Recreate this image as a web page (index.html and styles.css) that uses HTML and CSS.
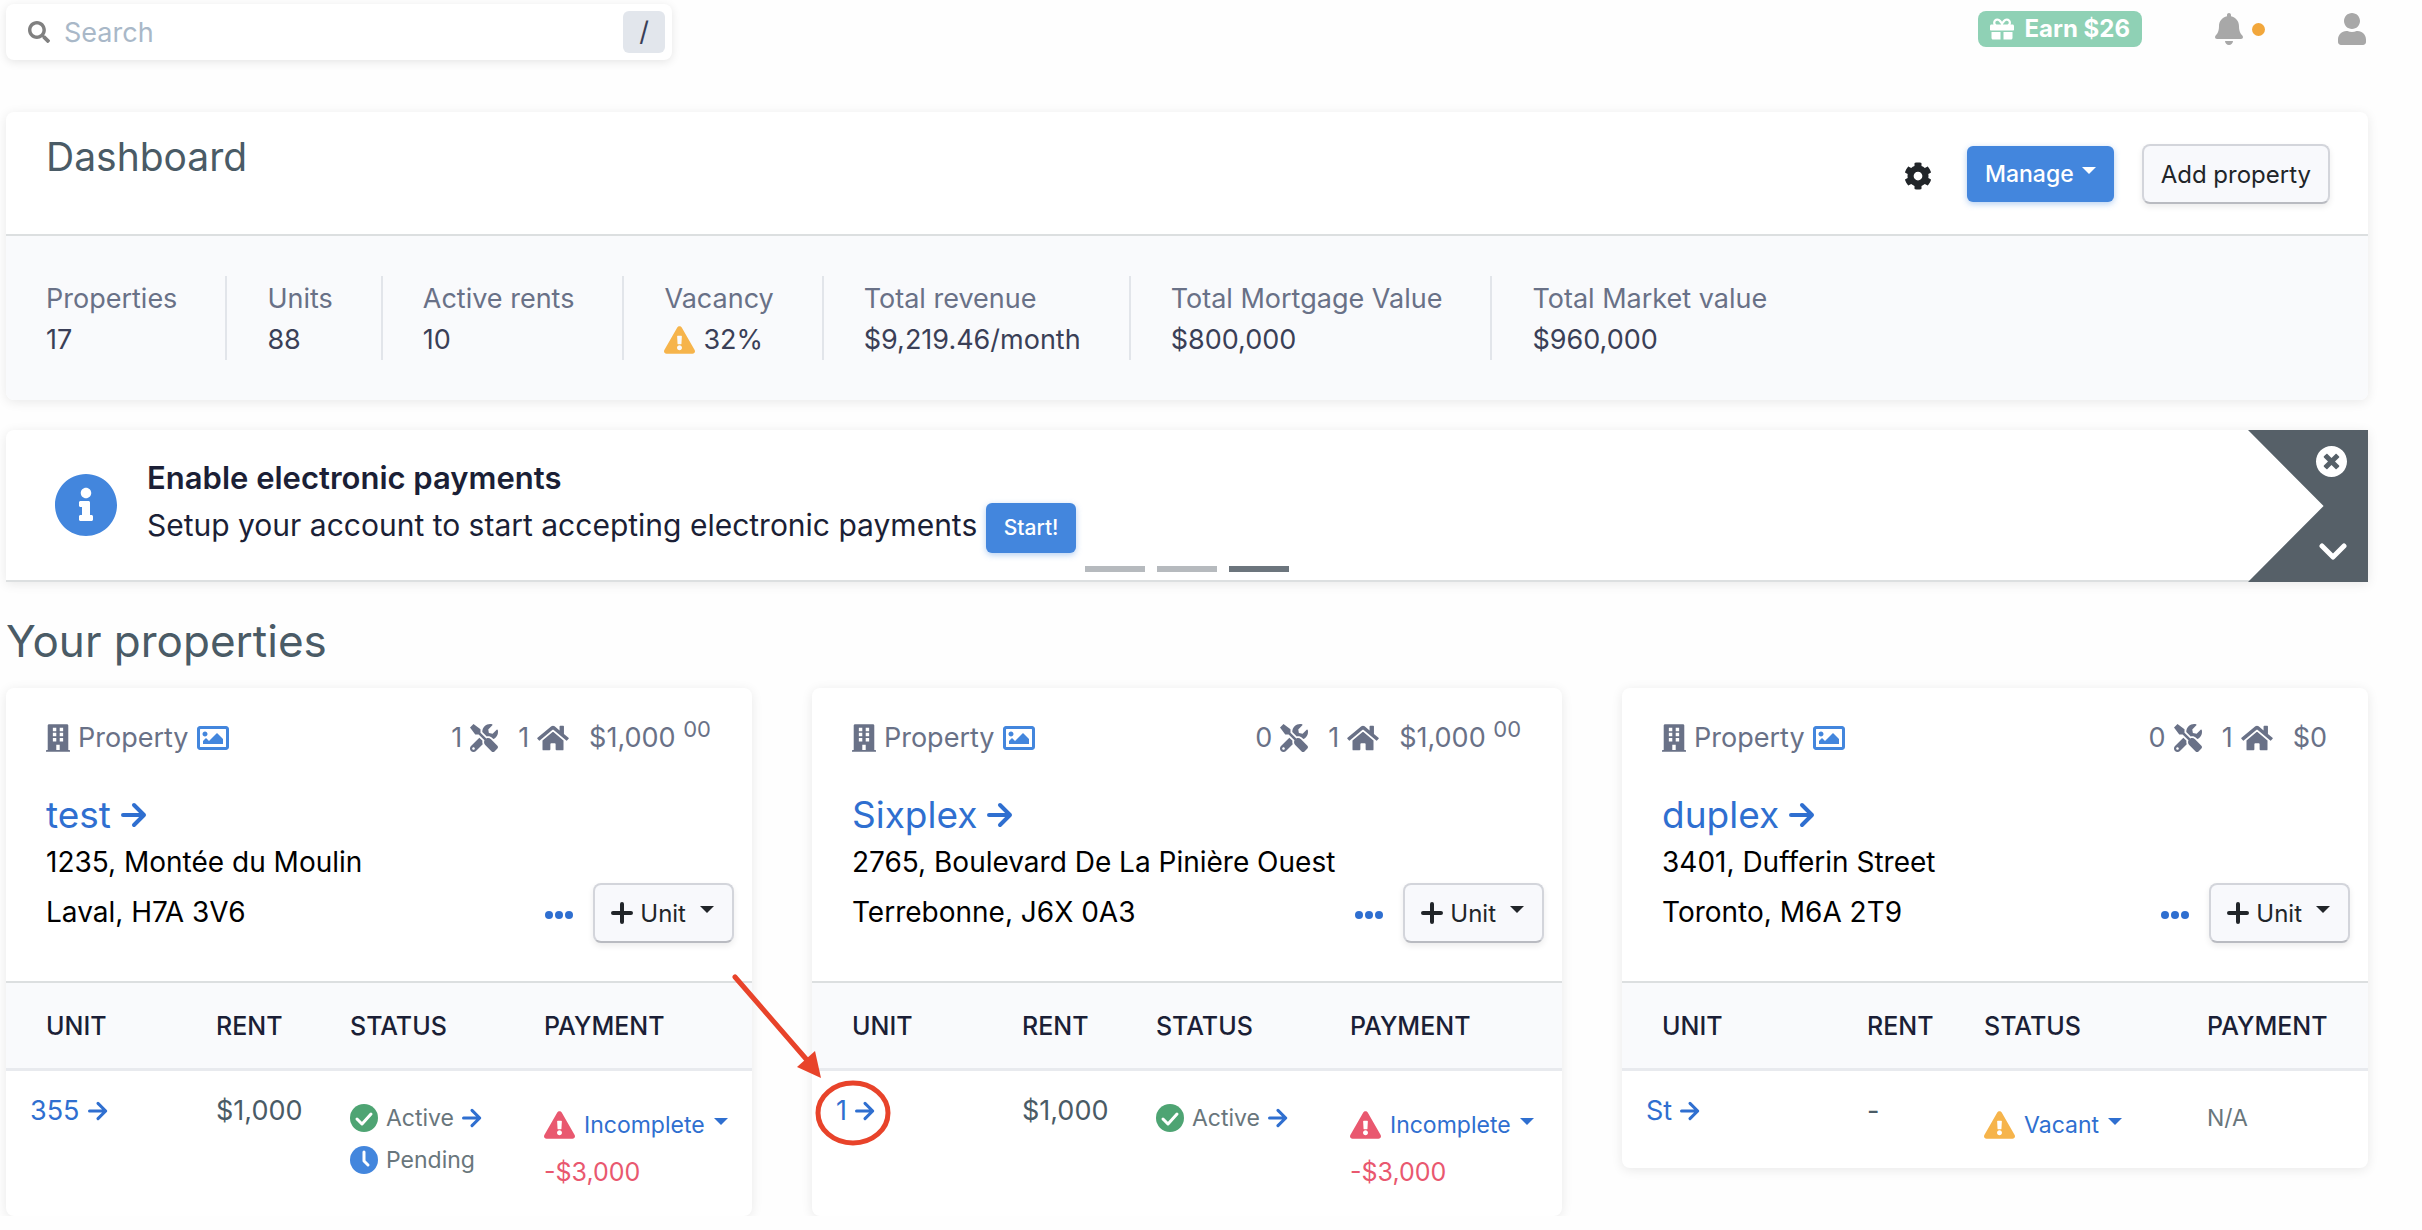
FILE: index.html
```html
<!DOCTYPE html>
<html lang="en">
<head>
    <meta charset="utf-8">
    <title>Dashboard</title>
    <link rel="stylesheet" href="styles.css">
</head>
<body>
    <!-- Icons used on the page -->
    <svg class="sprite" aria-hidden="true">
        <symbol id="search" viewBox="0 0 512 512"><path d="M505 442.7L405.3 343c-4.5-4.5-10.6-7-17-7H372c27.6-35.3 44-79.7 44-128C416 93.1 322.9 0 208 0S0 93.1 0 208s93.1 208 208 208c48.3 0 92.7-16.4 128-44v16.3c0 6.4 2.5 12.5 7 17l99.7 99.7c9.4 9.4 24.6 9.4 33.9 0l28.3-28.3c9.4-9.4 9.4-24.6.1-34zM208 336c-70.7 0-128-57.2-128-128 0-70.7 57.2-128 128-128 70.7 0 128 57.2 128 128 0 70.7-57.2 128-128 128z"/></symbol>
        <symbol id="gift" viewBox="0 0 512 512"><path d="M32 448c0 17.7 14.3 32 32 32h160V320H32v128zm256 32h160c17.7 0 32-14.3 32-32V320H288v160zm192-320h-42.1c6.2-12.1 10.1-25.5 10.1-40 0-48.5-39.5-88-88-88-41.6 0-68.5 21.3-103 68.3-34.5-47-61.4-68.3-103-68.3-48.5 0-88 39.5-88 88 0 14.5 3.8 27.9 10.1 40H32c-17.7 0-32 14.3-32 32v80c0 8.8 7.2 16 16 16h480c8.8 0 16-7.2 16-16v-80c0-17.7-14.3-32-32-32zm-326.1 0c-22.1 0-40-17.9-40-40s17.9-40 40-40c19.9 0 34.6 3.3 86.1 80h-86.1zm206.1 0h-86.1c51.4-76.5 65.7-80 86.1-80 22.1 0 40 17.9 40 40s-17.9 40-40 40z"/></symbol>
        <symbol id="bell" viewBox="0 0 448 512"><path d="M224 512c35.32 0 63.97-28.65 63.97-64H160.03c0 35.35 28.65 64 63.97 64zm215.39-149.71c-19.32-20.76-55.47-51.99-55.47-154.29 0-77.7-54.48-139.9-127.94-155.16V32c0-17.67-14.32-32-31.98-32s-31.98 14.33-31.98 32v20.84C118.56 68.1 64.08 130.3 64.08 208c0 102.3-36.15 133.53-55.47 154.29-6 6.45-8.66 14.16-8.61 21.71.11 16.4 12.98 32 32.1 32h383.8c19.12 0 32-15.6 32.1-32 .05-7.55-2.61-15.27-8.61-21.71z"/></symbol>
        <symbol id="user" viewBox="0 0 448 512"><path d="M224 256c70.7 0 128-57.3 128-128S294.7 0 224 0 96 57.3 96 128s57.3 128 128 128zm89.6 32h-16.7c-22.2 10.2-46.9 16-72.9 16s-50.6-5.8-72.9-16h-16.7C60.2 288 0 348.2 0 422.4V464c0 26.5 21.5 48 48 48h352c26.5 0 48-21.5 48-48v-41.6c0-74.2-60.2-134.4-134.4-134.4z"/></symbol>
        <symbol id="cog" viewBox="0 0 512 512"><path d="M487.4 315.7l-42.6-24.6c4.3-23.2 4.3-47 0-70.2l42.6-24.6c4.9-2.8 7.1-8.6 5.5-14-11.1-35.6-30-67.8-54.7-94.6-3.8-4.1-10-5.1-14.8-2.3L380.8 110c-17.9-15.4-38.5-27.3-60.8-35.1V25.8c0-5.6-3.9-10.5-9.4-11.7-36.7-8.2-74.3-7.8-109.2 0-5.5 1.2-9.4 6.1-9.4 11.7V75c-22.2 7.9-42.8 19.8-60.8 35.1L88.7 85.5c-4.9-2.8-11-1.9-14.8 2.3-24.7 26.7-43.6 58.9-54.7 94.6-1.7 5.4.6 11.2 5.5 14L67.3 221c-4.3 23.2-4.3 47 0 70.2l-42.6 24.6c-4.9 2.8-7.1 8.6-5.5 14 11.1 35.6 30 67.8 54.7 94.6 3.8 4.1 10 5.1 14.8 2.3l42.6-24.6c17.9 15.4 38.5 27.3 60.8 35.1v49.2c0 5.6 3.9 10.5 9.4 11.7 36.7 8.2 74.3 7.8 109.2 0 5.5-1.2 9.4-6.1 9.4-11.7v-49.2c22.2-7.9 42.8-19.8 60.8-35.1l42.6 24.6c4.9 2.8 11 1.9 14.8-2.3 24.7-26.7 43.6-58.9 54.7-94.6 1.5-5.5-.7-11.3-5.6-14.1zM256 336c-44.1 0-80-35.9-80-80s35.9-80 80-80 80 35.9 80 80-35.9 80-80 80z"/></symbol>
        <symbol id="warning" viewBox="0 0 576 512"><path d="M569.517 440.013C587.975 472.007 564.806 512 527.94 512H48.054c-36.937 0-59.999-40.055-41.577-71.987L246.423 23.985c18.467-32.009 64.72-31.951 83.154 0l239.94 416.028zM288 354c-25.405 0-46 20.595-46 46s20.595 46 46 46 46-20.595 46-46-20.595-46-46-46zm-43.673-165.346l7.418 136c.347 6.364 5.609 11.346 11.982 11.346h48.546c6.373 0 11.635-4.982 11.982-11.346l7.418-136c.375-6.874-5.098-12.654-11.982-12.654h-63.383c-6.884 0-12.356 5.78-11.981 12.654z"/></symbol>
        <symbol id="info" viewBox="8 8 496 496"><path d="M256 8C119.043 8 8 119.083 8 256c0 136.997 111.043 248 248 248s248-111.003 248-248C504 119.083 392.957 8 256 8zm0 110c23.196 0 42 18.804 42 42s-18.804 42-42 42-42-18.804-42-42 18.804-42 42-42zm56 254c0 6.627-5.373 12-12 12h-88c-6.627 0-12-5.373-12-12v-24c0-6.627 5.373-12 12-12h12v-64h-12c-6.627 0-12-5.373-12-12v-24c0-6.627 5.373-12 12-12h64c6.627 0 12 5.373 12 12v100h12c6.627 0 12 5.373 12 12v24z"/></symbol>
        <symbol id="close" viewBox="8 8 496 496"><path d="M256 8C119 8 8 119 8 256s111 248 248 248 248-111 248-248S393 8 256 8zm121.6 313.1c4.7 4.7 4.7 12.3 0 17L338 377.6c-4.7 4.7-12.3 4.7-17 0L256 312l-65.1 65.6c-4.7 4.7-12.3 4.7-17 0L134.4 338c-4.7-4.7-4.7-12.3 0-17l65.6-65-65.6-65.1c-4.7-4.7-4.7-12.3 0-17l39.6-39.6c4.7-4.7 12.3-4.7 17 0l65 65.7 65.1-65.6c4.7-4.7 12.3-4.7 17 0l39.6 39.6c4.7 4.7 4.7 12.3 0 17L312 256l65.6 65.1z"/></symbol>
        <symbol id="chevron" viewBox="0 0 28 18"><path d="M3 3l11 11L25 3" fill="none" stroke="currentColor" stroke-width="5" stroke-linecap="round" stroke-linejoin="round"/></symbol>
        <symbol id="building" viewBox="0 0 448 512"><path fill-rule="evenodd" d="M436 480h-20V24c0-13-11-24-24-24H56C43 0 32 11 32 24v456H12c-7 0-12 5-12 12v20h448v-20c0-7-5-12-12-12zM128 64h64v64h-64zM256 64h64v64h-64zM128 160h64v64h-64zM256 160h64v64h-64zM128 256h64v64h-64zM256 256h64v64h-64zM192 384h64v96h-64z"/></symbol>
        <symbol id="image" viewBox="0 0 512 512"><path d="M464 64H48C21.49 64 0 85.49 0 112v288c0 26.51 21.49 48 48 48h416c26.51 0 48-21.49 48-48V112c0-26.51-21.49-48-48-48zm-6 336H54a6 6 0 0 1-6-6V118a6 6 0 0 1 6-6h404a6 6 0 0 1 6 6v276a6 6 0 0 1-6 6zM128 152c-22.091 0-40 17.909-40 40s17.909 40 40 40 40-17.909 40-40-17.909-40-40-40zM96 352h320v-80l-87.515-87.515c-4.686-4.686-12.284-4.686-16.971 0L192 304l-39.515-39.515c-4.686-4.686-12.284-4.686-16.971 0L96 304v48z"/></symbol>
        <symbol id="tools" viewBox="0 0 512 512"><path d="M501.1 395.7L384 278.6c-23.1-23.1-57.6-27.6-85.4-13.9L192 158.1V96L64 0 0 64l96 128h62.1l106.6 106.6c-13.6 27.8-9.2 62.3 13.9 85.4l117.1 117.1c14.6 14.6 38.2 14.6 52.7 0l52.7-52.7c14.5-14.6 14.5-38.2 0-52.7zM331.7 225c28.3 0 54.9 11 74.9 31l19.4 19.4c15.8-6.9 30.8-16.5 43.8-29.5 37.1-37.1 49.7-89.3 37.9-136.7-2.2-9-13.5-12.1-20.1-5.5l-74.4 74.4-67.9-11.3L334 98.9l74.4-74.4c6.6-6.6 3.4-17.9-5.7-20.2-47.4-11.7-99.6.9-136.6 37.9-28.5 28.5-41.9 66.1-41.2 103.6l82.1 82.1c8.1-1.9 16.5-2.9 24.7-2.9zm-103.9 82l-56.7-56.7L18.7 402.8c-25 25-25 65.5 0 90.5s65.5 25 90.5 0l123.6-123.6c-7.6-19.9-9.9-41.6-5-62.7zM64 472c-13.2 0-24-10.8-24-24 0-13.3 10.7-24 24-24s24 10.7 24 24c0 13.2-10.7 24-24 24z"/></symbol>
        <symbol id="home" viewBox="0 0 576 512"><path d="M280.37 148.26L96 300.11V464a16 16 0 0 0 16 16l112.06-.29a16 16 0 0 0 15.92-16V368a16 16 0 0 1 16-16h64a16 16 0 0 1 16 16v95.64a16 16 0 0 0 16 16.05L464 480a16 16 0 0 0 16-16V300L295.67 148.26a12.19 12.19 0 0 0-15.3 0zM571.6 251.47L488 182.56V44.05a12 12 0 0 0-12-12h-56a12 12 0 0 0-12 12v72.61L318.47 43a48 48 0 0 0-61 0L4.34 251.47a12 12 0 0 0-1.6 16.9l25.5 31A12 12 0 0 0 45.15 301l235.22-193.74a12.19 12.19 0 0 1 15.3 0L530.9 301a12 12 0 0 0 16.9-1.6l25.5-31a12 12 0 0 0-1.7-16.93z"/></symbol>
        <symbol id="arrow" viewBox="0 0 26 26"><path d="M2 13h21M13 3l10 10-10 10" fill="none" stroke="currentColor" stroke-width="4" stroke-linecap="round" stroke-linejoin="round"/></symbol>
        <symbol id="dots" viewBox="0 0 28 10"><circle cx="4" cy="5" r="4"/><circle cx="14" cy="5" r="4"/><circle cx="24" cy="5" r="4"/></symbol>
        <symbol id="plus" viewBox="0 0 22 22"><path d="M11 2v18M2 11h18" fill="none" stroke="currentColor" stroke-width="4" stroke-linecap="round"/></symbol>
        <symbol id="check" viewBox="0 0 28 28"><circle cx="14" cy="14" r="14"/><path d="M7 15l5 5 9-10" fill="none" stroke="#fff" stroke-width="3" stroke-linecap="round" stroke-linejoin="round"/></symbol>
        <symbol id="clock" viewBox="0 0 28 28"><circle cx="14" cy="14" r="14"/><path d="M14 6v9l4 4" fill="none" stroke="#fff" stroke-width="3" stroke-linecap="round" stroke-linejoin="round"/></symbol>
    </svg>

    <div class="page">
        <header class="topbar">
            <label class="search">
                <svg class="icon icon-search"><use href="#search"/></svg>
                <input type="text" placeholder="Search" aria-label="Search">
                <kbd>/</kbd>
            </label>
            <nav class="top-links">
                <a href="#" class="earn"><svg class="icon icon-gift"><use href="#gift"/></svg>Earn $26</a>
                <a href="#" class="bell" aria-label="Notifications"><svg class="icon icon-top"><use href="#bell"/></svg><span class="bell-dot"></span></a>
                <a href="#" class="account" aria-label="Account"><svg class="icon icon-top"><use href="#user"/></svg></a>
            </nav>
        </header>

        <section class="card summary">
            <div class="summary-head">
                <h1>Dashboard</h1>
                <div class="summary-actions">
                    <button type="button" class="cog-btn" aria-label="Settings"><svg class="icon icon-cog"><use href="#cog"/></svg></button>
                    <button type="button" class="btn btn-primary">Manage<span class="caret"></span></button>
                    <button type="button" class="btn btn-light">Add property</button>
                </div>
            </div>
            <dl class="stats">
                <div><dt>Properties</dt><dd>17</dd></div>
                <div><dt>Units</dt><dd>88</dd></div>
                <div><dt>Active rents</dt><dd>10</dd></div>
                <div><dt>Vacancy</dt><dd><svg class="icon icon-warning orange"><use href="#warning"/></svg>32%</dd></div>
                <div><dt>Total revenue</dt><dd>$9,219.46/month</dd></div>
                <div><dt>Total Mortgage Value</dt><dd>$800,000</dd></div>
                <div><dt>Total Market value</dt><dd>$960,000</dd></div>
            </dl>
        </section>

        <section class="card notice">
            <svg class="icon icon-info"><use href="#info"/></svg>
            <div class="notice-text">
                <strong>Enable electronic payments</strong>
                <p>Setup your account to start accepting electronic payments <button type="button" class="btn btn-primary btn-small">Start!</button></p>
            </div>
            <div class="notice-controls">
                <button type="button" aria-label="Close"><svg class="icon icon-close"><use href="#close"/></svg></button>
                <button type="button" aria-label="Next"><svg class="icon icon-chevron"><use href="#chevron"/></svg></button>
            </div>
            <div class="indicators"><span></span><span></span><span class="active"></span></div>
        </section>

        <h2>Your properties</h2>

        <div class="properties">
            <article class="card property">
                <div class="property-body">
                    <div class="property-top">
                        <span class="kind"><svg class="icon icon-building"><use href="#building"/></svg>Property<a href="#" aria-label="Picture"><svg class="icon icon-image"><use href="#image"/></svg></a></span>
                        <span class="count">1<svg class="icon icon-tools"><use href="#tools"/></svg></span>
                        <span class="count">1<svg class="icon icon-home"><use href="#home"/></svg></span>
                        <span class="amount">$1,000 <sup>00</sup></span>
                    </div>
                    <h3><a href="#">test<svg class="icon icon-arrow-big"><use href="#arrow"/></svg></a></h3>
                    <div class="property-bottom">
                        <address>1235, Montée du Moulin<br>Laval, H7A 3V6</address>
                        <button type="button" class="more" aria-label="More"><svg class="icon icon-dots"><use href="#dots"/></svg></button>
                        <button type="button" class="btn btn-light btn-unit"><svg class="icon icon-plus"><use href="#plus"/></svg>Unit<span class="caret"></span></button>
                    </div>
                </div>
                <table class="units">
                    <colgroup><col class="col-unit"><col class="col-rent"><col class="col-status"><col></colgroup>
                    <thead>
                        <tr><th>UNIT</th><th>RENT</th><th>STATUS</th><th>PAYMENT</th></tr>
                    </thead>
                    <tbody>
                        <tr>
                            <td><a href="#">355<svg class="icon icon-arrow"><use href="#arrow"/></svg></a></td>
                            <td>$1,000</td>
                            <td>
                                <div class="status"><svg class="icon icon-status green"><use href="#check"/></svg>Active<a href="#" aria-label="Open lease"><svg class="icon icon-arrow"><use href="#arrow"/></svg></a></div>
                                <div class="status"><svg class="icon icon-status blue"><use href="#clock"/></svg>Pending</div>
                            </td>
                            <td>
                                <button type="button" class="drop"><svg class="icon icon-warning red"><use href="#warning"/></svg>Incomplete<span class="caret"></span></button>
                                <div class="balance">-$3,000</div>
                            </td>
                        </tr>
                    </tbody>
                </table>
            </article>

            <article class="card property">
                <div class="property-body">
                    <div class="property-top">
                        <span class="kind"><svg class="icon icon-building"><use href="#building"/></svg>Property<a href="#" aria-label="Picture"><svg class="icon icon-image"><use href="#image"/></svg></a></span>
                        <span class="count">0<svg class="icon icon-tools"><use href="#tools"/></svg></span>
                        <span class="count">1<svg class="icon icon-home"><use href="#home"/></svg></span>
                        <span class="amount">$1,000 <sup>00</sup></span>
                    </div>
                    <h3><a href="#">Sixplex<svg class="icon icon-arrow-big"><use href="#arrow"/></svg></a></h3>
                    <div class="property-bottom">
                        <address>2765, Boulevard De La Pinière Ouest<br>Terrebonne, J6X 0A3</address>
                        <button type="button" class="more" aria-label="More"><svg class="icon icon-dots"><use href="#dots"/></svg></button>
                        <button type="button" class="btn btn-light btn-unit"><svg class="icon icon-plus"><use href="#plus"/></svg>Unit<span class="caret"></span></button>
                    </div>
                </div>
                <table class="units">
                    <colgroup><col class="col-unit"><col class="col-rent"><col class="col-status"><col></colgroup>
                    <thead>
                        <tr><th>UNIT</th><th>RENT</th><th>STATUS</th><th>PAYMENT</th></tr>
                    </thead>
                    <tbody>
                        <tr>
                            <td><a href="#">1<svg class="icon icon-arrow"><use href="#arrow"/></svg></a></td>
                            <td>$1,000</td>
                            <td>
                                <div class="status"><svg class="icon icon-status green"><use href="#check"/></svg>Active<a href="#" aria-label="Open lease"><svg class="icon icon-arrow"><use href="#arrow"/></svg></a></div>
                            </td>
                            <td>
                                <button type="button" class="drop"><svg class="icon icon-warning red"><use href="#warning"/></svg>Incomplete<span class="caret"></span></button>
                                <div class="balance">-$3,000</div>
                            </td>
                        </tr>
                    </tbody>
                </table>
                <!-- Red arrow pointing at the unit link -->
                <svg class="pointer" viewBox="0 0 170 180" aria-hidden="true">
                    <path d="M6 7L78 90" stroke="#e8432a" stroke-width="5" stroke-linecap="round"/>
                    <path d="M92 108L86 81 68 97z" fill="#e8432a"/>
                    <ellipse cx="124" cy="143" rx="35" ry="30" fill="none" stroke="#e8432a" stroke-width="5"/>
                </svg>
            </article>

            <article class="card property">
                <div class="property-body">
                    <div class="property-top">
                        <span class="kind"><svg class="icon icon-building"><use href="#building"/></svg>Property<a href="#" aria-label="Picture"><svg class="icon icon-image"><use href="#image"/></svg></a></span>
                        <span class="count">0<svg class="icon icon-tools"><use href="#tools"/></svg></span>
                        <span class="count">1<svg class="icon icon-home"><use href="#home"/></svg></span>
                        <span class="amount">$0</span>
                    </div>
                    <h3><a href="#">duplex<svg class="icon icon-arrow-big"><use href="#arrow"/></svg></a></h3>
                    <div class="property-bottom">
                        <address>3401, Dufferin Street<br>Toronto, M6A 2T9</address>
                        <button type="button" class="more" aria-label="More"><svg class="icon icon-dots"><use href="#dots"/></svg></button>
                        <button type="button" class="btn btn-light btn-unit"><svg class="icon icon-plus"><use href="#plus"/></svg>Unit<span class="caret"></span></button>
                    </div>
                </div>
                <table class="units units-vacant">
                    <colgroup><col class="col-unit"><col class="col-rent"><col class="col-status"><col></colgroup>
                    <thead>
                        <tr><th>UNIT</th><th>RENT</th><th>STATUS</th><th>PAYMENT</th></tr>
                    </thead>
                    <tbody>
                        <tr>
                            <td><a href="#">St<svg class="icon icon-arrow"><use href="#arrow"/></svg></a></td>
                            <td>-</td>
                            <td><button type="button" class="drop"><svg class="icon icon-warning orange"><use href="#warning"/></svg>Vacant<span class="caret"></span></button></td>
                            <td><div class="status">N/A</div></td>
                        </tr>
                    </tbody>
                </table>
            </article>
        </div>
    </div>
</body>
</html>
```
FILE: styles.css
```css
* {
    box-sizing: border-box;
}
body {
    margin: 0;
    background-color: #fefefe;
    font-family: Inter, "Liberation Sans", sans-serif;
    font-size: 27px;
    line-height: 42px;
    color: #3a3f57;
}
h1, h2, h3, p, dl, dd {
    margin: 0;
    font-weight: normal;
}
a {
    color: #2f6fd0;
    text-decoration: none;
}
button, input {
    font-family: inherit;
}
button {
    padding: 0;
    border: none;
    background: none;
    cursor: pointer;
}
.sprite {
    display: none;
}
.page {
    padding: 4px 54px 0 6px;
}
.card {
    background-color: white;
    border-radius: 8px;
    box-shadow: 0 2px 12px rgba(0, 0, 0, 0.09);
}

/* Icons */
.icon {
    display: block;
    flex-shrink: 0;
    fill: currentColor;
}
.icon-search { width: 22px; height: 22px; color: #808080; }
.icon-gift { width: 24px; height: 24px; }
.icon-top { width: 28px; height: 32px; }
.icon-cog { width: 28px; height: 28px; }
.icon-warning { width: 31px; height: 28px; }
.icon-info { width: 62px; height: 62px; color: #4386dd; }
.icon-close { width: 31px; height: 31px; }
.icon-chevron { width: 28px; height: 18px; }
.icon-building { width: 24px; height: 28px; }
.icon-image { width: 32px; height: 32px; color: #4386dd; }
.icon-tools { width: 28px; height: 28px; }
.icon-home { width: 32px; height: 28px; }
.icon-arrow-big { width: 26px; height: 26px; }
.icon-arrow { width: 20px; height: 20px; }
.icon-dots { width: 28px; height: 10px; }
.icon-plus { width: 22px; height: 22px; }
.icon-status { width: 28px; height: 28px; }
.orange { color: #f6b44b; }
.red { color: #e9586f; }
.green { color: #4ea473; }
.blue { color: #4386dd; }

.caret {
    border: 7px solid transparent;
    border-top-color: currentColor;
    border-bottom: none;
    margin-bottom: 7px;
}

/* Top bar */
.topbar {
    display: flex;
    justify-content: space-between;
    align-items: flex-start;
    margin-bottom: 52px;
}
.search {
    display: flex;
    align-items: center;
    gap: 14px;
    width: 28.2%;
    height: 56px;
    padding: 0 7px 0 22px;
    border-radius: 8px;
    background-color: white;
    box-shadow: 0 2px 10px rgba(0, 0, 0, 0.1);
}
.search input {
    flex: 1;
    min-width: 0;
    padding: 0;
    border: none;
    outline: none;
    background: none;
    font-size: 27px;
}
.search input::placeholder {
    color: #a9b8c8;
}
.search kbd {
    width: 42px;
    border-radius: 6px;
    background-color: #e2e6ec;
    font-family: inherit;
    text-align: center;
}
.top-links {
    display: flex;
    align-items: center;
    padding: 7px 2px 0 0;
}
.top-links a {
    color: #a8a8a8;
}
.top-links .earn {
    display: flex;
    align-items: center;
    gap: 10px;
    height: 36px;
    padding: 0 12px;
    border-radius: 8px;
    background-color: #8fd1b5;
    color: white;
    font-size: 24px;
    font-weight: bold;
}
.bell {
    display: flex;
    align-items: center;
    gap: 9px;
    margin: 0 73px;
}
.bell-dot {
    width: 13px;
    height: 13px;
    border-radius: 50%;
    background-color: #f2a73b;
}

/* Buttons */
.btn {
    display: inline-flex;
    align-items: center;
    gap: 8px;
    height: 56px;
    padding: 0 18px;
    border-radius: 6px;
    font-size: 23px;
    font-weight: 500;
}
.btn-primary {
    background-color: #4386dd;
    color: white;
    box-shadow: 0 2px 6px rgba(67, 134, 221, 0.4);
}
.btn-primary:hover {
    background-color: #2f6fd0;
}
.btn-light {
    height: 60px;
    padding: 0 17px;
    border: 2px solid #d3d5db;
    border-bottom-color: #b9bbc1;
    border-radius: 8px;
    background-color: #f8f9fc;
    color: #212529;
    box-shadow: 0 3px 6px rgba(0, 0, 0, 0.08);
    font-size: 24px;
    font-weight: 400;
}
.btn-small {
    height: 50px;
    font-size: 21px;
    vertical-align: middle;
}

/* Dashboard summary */
.summary {
    overflow: hidden;
    margin-bottom: 30px;
}
.summary-head {
    display: flex;
    justify-content: space-between;
    height: 124px;
    padding: 24px 38px 0 40px;
    border-bottom: 2px solid #dcdfe0;
}
h1 {
    color: #4a5b66;
    font-size: 39px;
}
.summary-actions {
    display: flex;
    align-items: center;
    gap: 28px;
    height: 76px;
}
.cog-btn {
    color: #212529;
    margin: 4px 7px 0 0;
}
.stats {
    display: flex;
    padding: 40px;
    background-color: #f9fafc;
    line-height: 41px;
}
.stats div {
    padding: 2px 48px 0 40px;
    border-right: 2px solid #e2e5ea;
}
.stats div:first-child {
    padding-left: 0;
}
.stats div:last-child {
    border-right: none;
}
.stats dt {
    color: #697187;
}
.stats dd {
    display: flex;
    align-items: center;
    gap: 8px;
}

/* Payments notice */
.notice {
    position: relative;
    display: flex;
    align-items: center;
    gap: 30px;
    height: 152px;
    padding-left: 49px;
    border-bottom: 2px solid #dcdfe0;
    border-radius: 8px 0 0 0;
    margin-bottom: 34px;
    color: #1b1f36;
    font-size: 30px;
}
.notice-text {
    flex: 1;
}
.notice-text strong {
    font-size: 31px;
    font-weight: 600;
}
.notice-text p {
    line-height: 52px;
}
.notice-controls {
    display: flex;
    flex-direction: column;
    justify-content: space-between;
    align-items: flex-end;
    width: 120px;
    height: 152px;
    margin-bottom: -2px;
    padding: 16px 21px 21px 0;
    background-color: #566068;
    clip-path: polygon(0 0, 100% 0, 100% 100%, 0 100%, 63% 50%);
}
.notice-controls button {
    color: white;
}
/* Slide markers over the bottom of the notice */
.indicators {
    position: absolute;
    left: 0;
    right: 0;
    bottom: 8px;
    display: flex;
    justify-content: center;
    gap: 12px;
}
.indicators span {
    width: 60px;
    height: 6px;
    background-color: #b6babe;
}
.indicators .active {
    background-color: #6c757d;
}

/* Properties */
h2 {
    color: #4a5b66;
    font-size: 44px;
    line-height: 50px;
    margin-bottom: 22px;
}
.properties {
    display: grid;
    grid-template-columns: repeat(3, 1fr);
    gap: 60px;
    align-items: start;
}
.property {
    position: relative;
}
.property-body {
    padding: 28px 18px 38px 40px;
}
.property-top {
    display: flex;
    align-items: center;
    gap: 20px;
    height: 44px;
    margin-right: 23px;
    color: #697187;
}
.kind, .count {
    display: flex;
    align-items: center;
    gap: 8px;
}
.kind {
    margin-right: auto;
}
.property-top sup {
    font-size: 22px;
    line-height: 0;
}
h3 {
    margin-top: 33px;
    font-size: 37px;
    line-height: 44px;
}
h3 a, .units td > a {
    display: flex;
    align-items: center;
    gap: 10px;
}
.property-bottom {
    display: flex;
    align-items: flex-end;
    gap: 20px;
}
address {
    flex: 1;
    min-width: 0;
    padding-bottom: 6px;
    color: black;
    font-size: 28px;
    font-style: normal;
    line-height: 50px;
    white-space: nowrap;
}
.more {
    padding-bottom: 23px;
    color: #2f6fd0;
}
.btn-unit {
    gap: 7px;
    padding: 0 18px 0 16px;
}
.btn-unit .caret {
    margin-left: 7px;
}

/* Units table */
.units {
    width: 100%;
    table-layout: fixed;
    border-spacing: 0;
    border-top: 2px solid #dcdfe0;
}
.col-unit { width: 210px; }
.col-rent { width: 134px; }
.col-status { width: 194px; }
.units-vacant .col-unit { width: 245px; }
.units-vacant .col-rent { width: 117px; }
.units-vacant .col-status { width: 223px; }
.units th {
    padding: 22px 0 21px;
    border-bottom: 3px solid #e8eaee;
    background-color: #f9fafc;
    color: #1b1f36;
    font-size: 25px;
    font-weight: 500;
    text-align: left;
}
.units td {
    padding: 19px 0 20px;
    vertical-align: top;
    color: #4a5b66;
}
.units th:first-child {
    padding-left: 40px;
}
.units td:first-child {
    padding-left: 24px;
}
.units td > a {
    gap: 8px;
}
.status {
    display: flex;
    align-items: center;
    gap: 8px;
    color: #69767c;
    font-size: 23px;
}
.status:first-child {
    margin-top: 7px;
}
.drop {
    display: flex;
    align-items: center;
    gap: 9px;
    height: 46px;
    margin-top: 12px;
    color: #2f6fd0;
    font-size: 23px;
}
.balance {
    color: #e9586f;
    font-size: 25px;
    line-height: 48px;
}
.pointer {
    position: absolute;
    left: -83px;
    top: 282px;
    width: 170px;
    height: 180px;
}
```
